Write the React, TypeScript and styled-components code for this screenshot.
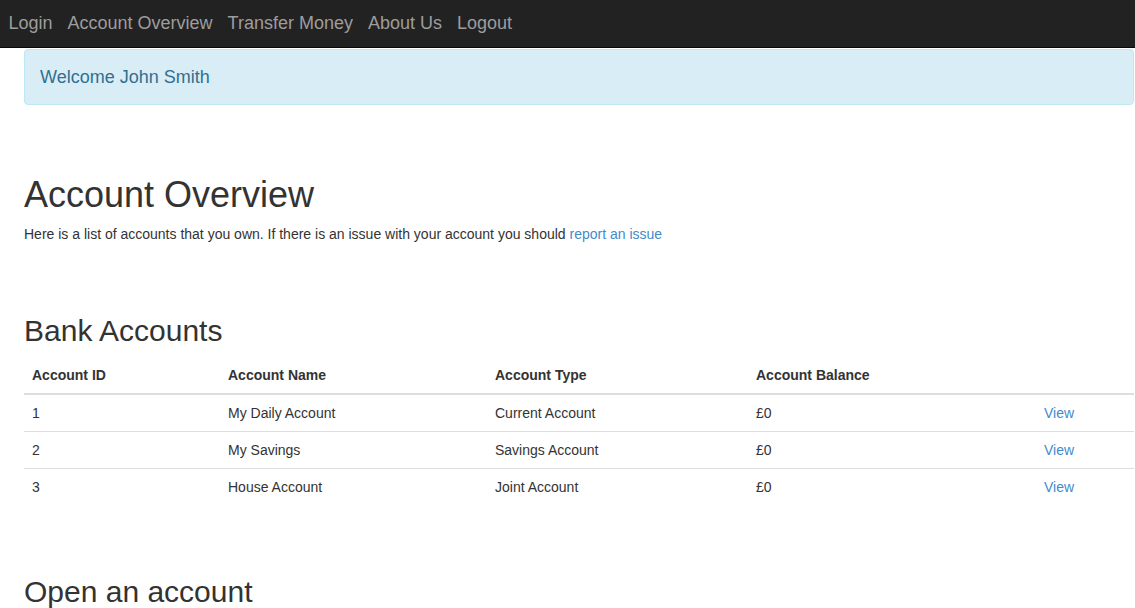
import styled, { createGlobalStyle } from "styled-components";

const Global = createGlobalStyle`
	body {
		margin: 0;
		font-family: "Liberation Sans", Arial, sans-serif;
		font-size: 14px;
		line-height: 20px;
		color: #333;
		background: #fff;
	}
	a { color: #428bca; text-decoration: none; }
`;

const Navbar = styled.nav`
	height: 47px;
	background: #222;
	border-bottom: 1px solid #080808;
	display: flex;
	align-items: center;
	padding-left: 1px;
`;

const NavLink = styled.a`
	color: #9d9d9d;
	font-size: 18px;
	line-height: 20px;
	padding: 0 7.5px;
	margin-top: -2px;
`;

const Page = styled.main`
	padding: 0 1px 0 24px;
`;

const Alert = styled.div`
	margin-top: 1px;
	padding: 15px;
	background: #d9edf7;
	border: 1px solid #bce8f1;
	border-radius: 4px;
	color: #31708f;
	font-size: 18px;
	line-height: 24px;
`;

const H1 = styled.h1`
	margin: 70px 0 9px;
	font-size: 36px;
	font-weight: 500;
	line-height: 1.1;
`;

const Lead = styled.p`
	margin: 0;
`;

const H2 = styled.h2<{ $top: number }>`
	margin: ${(p) => p.$top}px 0 10px;
	font-size: 30px;
	font-weight: 500;
	line-height: 1.1;
`;

const Table = styled.table`
	width: 100%;
	border-collapse: collapse;
	border-spacing: 0;
	table-layout: fixed;
	margin-bottom: 20px;
`;

const Th = styled.th<{ $w?: number }>`
	width: ${(p) => (p.$w ? p.$w + "px" : "auto")};
	text-align: left;
	padding: 8px;
	line-height: 20px;
	border-bottom: 2px solid #ddd;
	font-weight: bold;
`;

const Row = styled.tr`
	& + & td {
		border-top: 1px solid #ddd;
	}
`;

const Td = styled.td`
	padding: 8px;
	line-height: 20px;
`;

const accounts = [
	{ id: 1, name: "My Daily Account", type: "Current Account" },
	{ id: 2, name: "My Savings", type: "Savings Account" },
	{ id: 3, name: "House Account", type: "Joint Account" },
];

export default function App() {
	return (
		<>
			<Global />
			<Navbar>
				{["Login", "Account Overview", "Transfer Money", "About Us", "Logout"].map((l) => (
					<NavLink key={l} href="#">
						{l}
					</NavLink>
				))}
			</Navbar>
			<Page>
				<Alert>Welcome John Smith</Alert>
				<H1>Account Overview</H1>
				<Lead>
					Here is a list of accounts that you own. If there is an issue with your account you
					should <a href="#">report an issue</a>
				</Lead>
				<H2 $top={70}>Bank Accounts</H2>
				<Table>
					<thead>
						<tr>
							<Th $w={180}>Account ID</Th>
							<Th $w={251}>Account Name</Th>
							<Th $w={245}>Account Type</Th>
							<Th $w={272}>Account Balance</Th>
							<Th />
						</tr>
					</thead>
					<tbody>
						{accounts.map((a) => (
							<Row key={a.id}>
								<Td>{a.id}</Td>
								<Td>{a.name}</Td>
								<Td>{a.type}</Td>
								<Td>£0</Td>
								<Td>
									<a href="#">View</a>
								</Td>
							</Row>
						))}
					</tbody>
				</Table>
				<H2 $top={70}>Open an account</H2>
			</Page>
		</>
	);
}
